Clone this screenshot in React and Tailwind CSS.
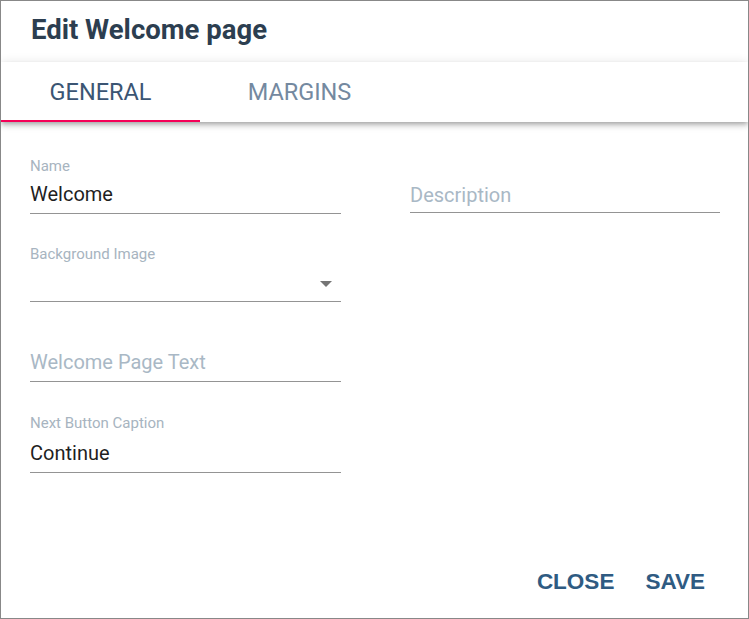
import { useState } from 'react';

const roboto = { fontFamily: 'Roboto, "Liberation Sans", sans-serif' };

function Field({ label, value, placeholder, select, gap = 'mt-[7px]', pad = 'pb-[7px]', className = '' }) {
  return (
    <div className={`border-b border-[#949494] ${pad} ${className}`}>
      <div className={`h-[18px] text-[15px] leading-[18px] text-[#a7b4c0] ${label ? '' : 'invisible'}`}>{label || '-'}</div>
      <div className={`${gap} h-[24px] flex items-center justify-between`}>
        {value ? (
          <span className="text-[20px] leading-[24px] text-[#1f1f1f]">{value}</span>
        ) : (
          <span className="text-[20px] leading-[24px] text-[#a9b8c5]">{placeholder}</span>
        )}
        {select && (
          <svg width="12" height="6" viewBox="0 0 12 6" className="mr-[9px] mt-[3px]">
            <path d="M0 0h12L6 6z" fill="#757575" />
          </svg>
        )}
      </div>
    </div>
  );
}

export default function App() {
  const [tab, setTab] = useState('general');

  return (
    <div className="w-[749px] h-[619px] border border-[#888888] bg-white flex flex-col overflow-hidden" style={roboto}>
      <div className="h-[61px] pl-[30px] pt-[14px]">
        <h1 className="text-[27.5px] leading-[30px] font-bold text-[#2c3e50]">Edit Welcome page</h1>
      </div>

      <div className="relative z-10 h-[60px] flex bg-white shadow-[0_2px_4px_-1px_rgba(0,0,0,0.2),0_4px_5px_0_rgba(0,0,0,0.14),0_1px_10px_0_rgba(0,0,0,0.12)]">
        {[
          { id: 'general', label: 'GENERAL' },
          { id: 'margins', label: 'MARGINS' }
        ].map(t => (
          <button
            key={t.id}
            onClick={() => setTab(t.id)}
            className={`w-[199px] h-full flex items-center justify-center text-[23.5px] leading-[28px] border-b-2 ${tab === t.id ? 'text-[#3b5573] border-[#f50057]' : 'text-[#7489a0] border-transparent'}`}
          >
            <span className="mt-[2px]">{t.label}</span>
          </button>
        ))}
      </div>

      <div className="grid grid-cols-[311px_310px] gap-x-[69px] pl-[29px]">
        <div className="pt-[35px]">
          <Field label="Name" value="Welcome" />
          <Field label="Background Image" select className="mt-[31px]" />
          <Field placeholder="Welcome Page Text" className="mt-[23px]" />
          <Field label="Next Button Caption" value="Continue" gap="mt-[9px]" className="mt-[32px]" />
        </div>
        <div className="pt-[34px]">
          <Field placeholder="Description" gap="mt-[9px]" pad="pb-[5px]" />
        </div>
      </div>

      <div className="mt-auto flex justify-end gap-[31px] pr-[43px] pb-[23px]">
        <button className="text-[22.5px] leading-[26px] font-bold text-[#2f5b82]" style={{ fontFamily: '"Liberation Sans", Arial, sans-serif' }}>CLOSE</button>
        <button className="text-[22.5px] leading-[26px] font-bold text-[#2f5b82]" style={{ fontFamily: '"Liberation Sans", Arial, sans-serif' }}>SAVE</button>
      </div>
    </div>
  );
}
